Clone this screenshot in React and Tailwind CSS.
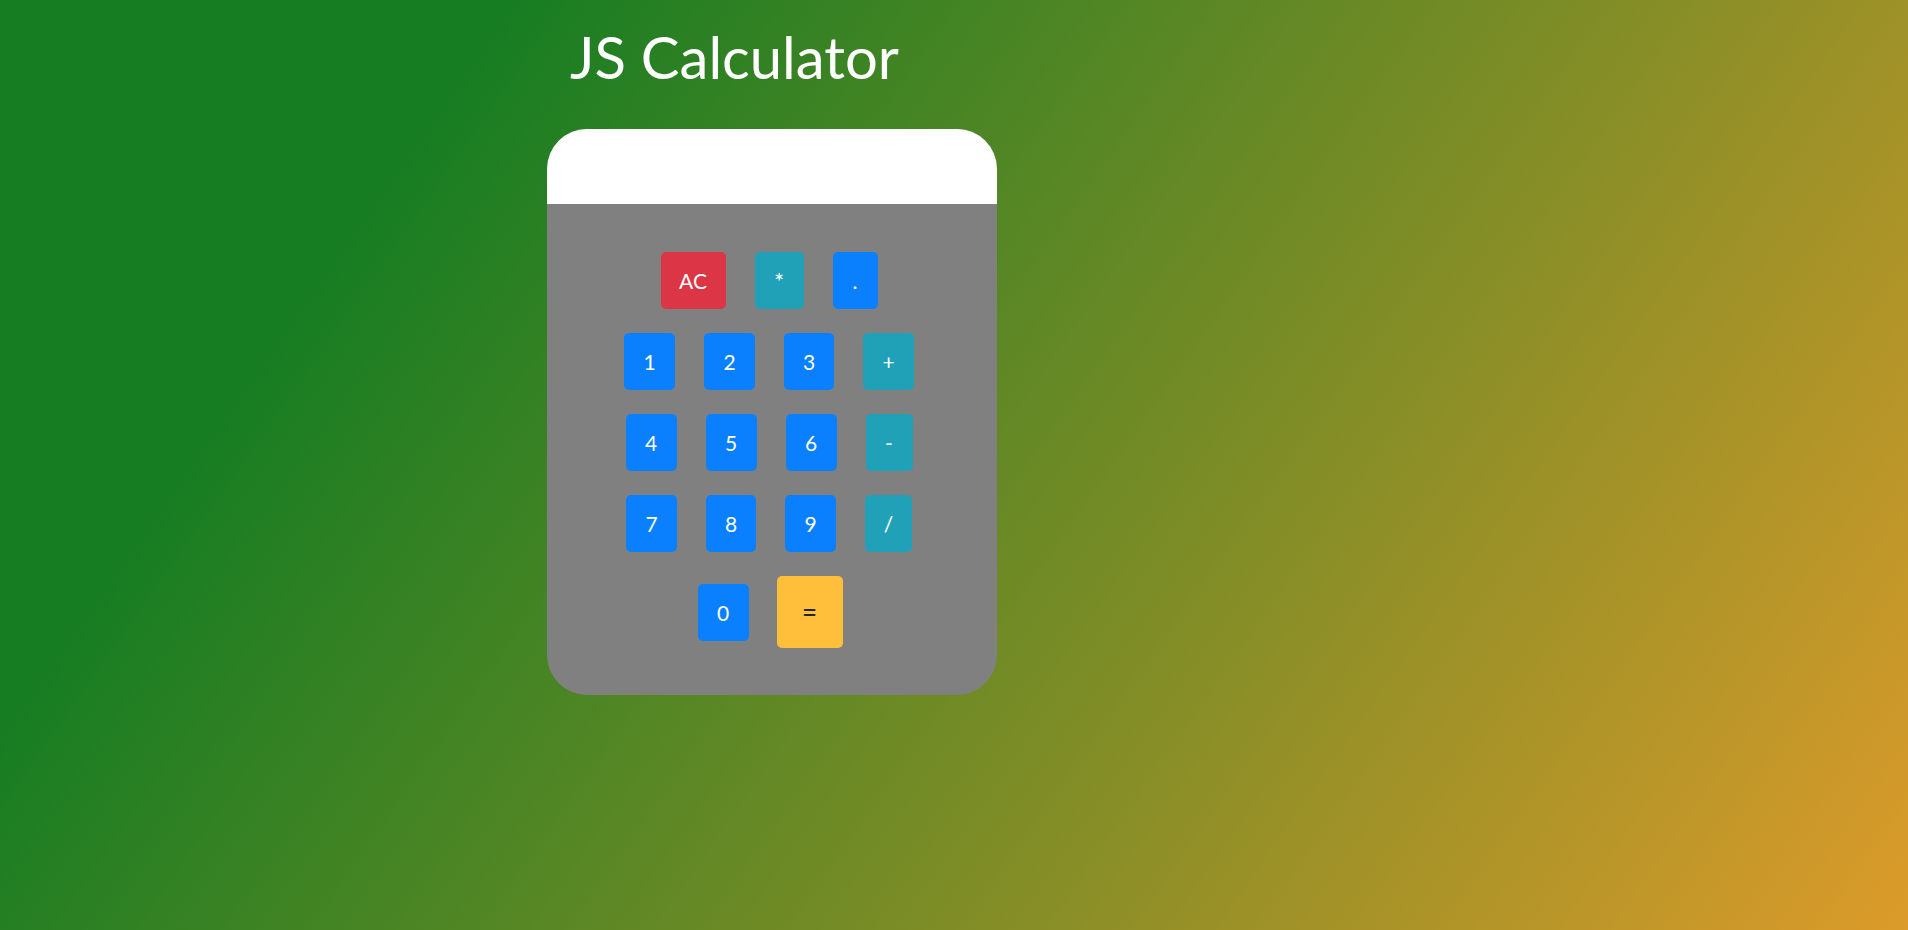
const keys = [
    [
        { label: 'AC', cls: 'w-[65px] bg-[#dc3545] text-white' },
        { label: '*', cls: 'w-[49px] bg-[#20a1b7] text-white text-[24px]' },
        { label: '.', cls: 'w-[45px] bg-[#0b80ff] text-white' },
    ],
    [
        { label: '1', cls: 'w-[51px] bg-[#0b80ff] text-white' },
        { label: '2', cls: 'w-[51px] bg-[#0b80ff] text-white' },
        { label: '3', cls: 'w-[50px] bg-[#0b80ff] text-white' },
        { label: '+', cls: 'w-[51px] bg-[#20a1b7] text-white' },
    ],
    [
        { label: '4', cls: 'w-[51px] bg-[#0b80ff] text-white' },
        { label: '5', cls: 'w-[51px] bg-[#0b80ff] text-white' },
        { label: '6', cls: 'w-[51px] bg-[#0b80ff] text-white' },
        { label: '-', cls: 'w-[47px] bg-[#20a1b7] text-white' },
    ],
    [
        { label: '7', cls: 'w-[51px] bg-[#0b80ff] text-white' },
        { label: '8', cls: 'w-[50px] bg-[#0b80ff] text-white' },
        { label: '9', cls: 'w-[51px] bg-[#0b80ff] text-white' },
        { label: '/', cls: 'w-[47px] bg-[#20a1b7] text-white' },
    ],
];

const Key = ({ label, cls }) => (
    <button className={`h-[57px] rounded-[5px] flex items-center justify-center text-[21px] leading-none ${cls}`}>
        {label}
    </button>
);

const App = () => {
    return (
        <div className="min-h-screen w-full bg-[linear-gradient(125deg,#177d22_20%,#dc9b2a_100%)] font-['Lato','Open_Sans',sans-serif]">
            <div className="ml-[547px] w-[450px] pt-[28px] pb-[40px]">
                <h1 className="pl-[23px] text-[58px] leading-none font-normal text-white h-[58px]">
                    JS Calculator
                </h1>

                <div className="mt-[43px] rounded-[40px] overflow-hidden bg-[#808080]">
                    {/* display */}
                    <div className="h-[75px] bg-white"></div>

                    <div className="flex flex-col gap-[24px] pt-[48px] pb-[47px] pr-[6px]">
                        {keys.map((row, i) => (
                            <div key={i} className="flex justify-center gap-[29px]">
                                {row.map((k) => (
                                    <Key key={k.label} {...k} />
                                ))}
                            </div>
                        ))}
                        <div className="flex justify-center items-center gap-[28px] pl-[2px]">
                            <Key label="0" cls="w-[51px] bg-[#0b80ff] text-white" />
                            <button className="w-[66px] h-[72px] rounded-[5px] bg-[#ffbf3a] text-[#212529] text-[26px] leading-none font-medium flex items-center justify-center">
                                =
                            </button>
                        </div>
                    </div>
                </div>
            </div>
        </div>
    );
};

export default App;
